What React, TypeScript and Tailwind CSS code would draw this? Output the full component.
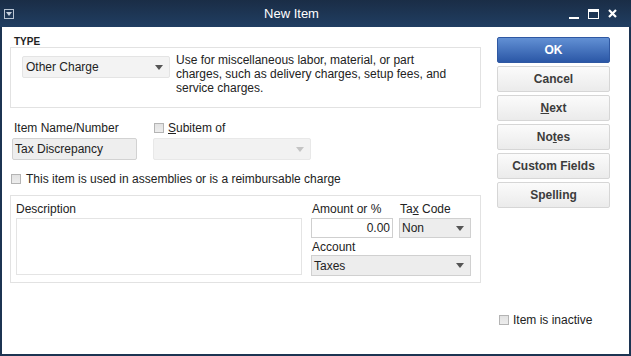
import React from "react";

const Arrow = ({ light = false }: { light?: boolean }) => (
  <svg width="8" height="5" viewBox="0 0 8 5" className="shrink-0">
    <path d="M0 0 L8 0 L4 5 Z" fill={light ? "#c4c4c4" : "#555"} />
  </svg>
);

const Check = () => (
  <span className="inline-block w-[10px] h-[10px] border border-[#b4b4b4] bg-gradient-to-b from-[#e2e2e2] to-[#ededed] shrink-0" />
);

const Btn = ({ children, primary = false }: { children: React.ReactNode; primary?: boolean }) => (
  <div
    className={
      primary
        ? "h-[26px] flex items-center justify-center rounded-[2px] border border-[#2f58a2] bg-gradient-to-b from-[#6290d4] to-[#2b57a6] text-white font-bold text-[12px]"
        : "h-[26px] flex items-center justify-center rounded-[2px] border border-[#d6d6d6] bg-gradient-to-b from-[#fbfbfb] to-[#ebebeb] text-[#3c3c3c] font-bold text-[12px]"
    }
  >
    {children}
  </div>
);

export default function App() {
  return (
    <div className="w-[631px] h-[356px] bg-[#1c3452] flex flex-col font-['Liberation_Sans',Arial,sans-serif] text-[#222] overflow-hidden">
      {/* Title bar */}
      <div className="h-[27px] shrink-0 flex items-center bg-gradient-to-b from-[#1a2d46] to-[#203e62] px-[4px]">
        <div className="w-[10px] h-[10px] border border-[#b9c4d2] flex items-center justify-center">
          <svg width="6" height="4" viewBox="0 0 6 4">
            <path d="M0 0 L6 0 L3 4 Z" fill="#c9d2de" />
          </svg>
        </div>
        <div className="flex-1 text-center text-white text-[13px]">New Item</div>
        <div className="flex items-center gap-[9px] pr-[10px]">
          <div className="w-[10px] h-[10px] flex items-end">
            <div className="w-[10px] h-[2px] bg-white" />
          </div>
          <div className="w-[11px] h-[10px] border-[1.5px] border-white border-t-[3px]" />
          <svg width="9" height="9" viewBox="0 0 9 9">
            <path d="M1 1 L8 8 M8 1 L1 8" stroke="white" strokeWidth="2.2" />
          </svg>
        </div>
      </div>

      {/* Body */}
      <div className="flex-1 mx-[2px] mb-[2px] bg-white flex text-[12px]">
        {/* Left column */}
        <div className="w-[471px] ml-[8px] flex flex-col">
          <div className="mt-[9px] pl-[4px] h-[11px] text-[10px] font-bold leading-[11px] text-[#222]">TYPE</div>
          <div className="h-[61px] border border-[#e2e2e2] flex pl-[11px] pt-[8px]">
            <div className="w-[148px] h-[22px] bg-[#f3f3f3] border border-[#e4e4e4] rounded-[2px] flex items-center pl-[3px] pr-[6px]">
              <span className="flex-1 text-[12px]">Other Charge</span>
              <Arrow />
            </div>
            <div className="ml-[6px] -mt-[3px] text-[12px] leading-[14px] w-[284px]">
              Use for miscellaneous labor, material, or part charges, such as delivery charges, setup fees, and service charges.
            </div>
          </div>

          <div className="flex mt-[13px]">
            <div className="flex flex-col w-[143px]">
              <div className="pl-[4px] h-[14px] leading-[14px]">Item Name/Number</div>
              <div className="mt-[3px] ml-[2px] w-[125px] h-[22px] bg-[#eeeeee] border border-[#d2d2d2] rounded-[2px] flex items-center pl-[2px]">
                Tax Discrepancy
              </div>
            </div>
            <div className="flex flex-col">
              <div className="pl-[1px] h-[14px] leading-[14px] flex items-center gap-[4px]">
                <Check />
                <span>
                  <u>S</u>ubitem of
                </span>
              </div>
              <div className="mt-[3px] w-[158px] h-[22px] bg-[#f2f2f2] border border-[#e8e8e8] rounded-[2px] flex items-center justify-end pr-[6px]">
                <Arrow light />
              </div>
            </div>
          </div>

          <div className="mt-[12px] flex items-center gap-[5px] pl-[1px] h-[14px] leading-[14px]">
            <Check />
            <span>This item is used in assemblies or is a reimbursable charge</span>
          </div>

          <div className="mt-[9px] h-[88px] border border-[#e2e2e2] flex pl-[5px] pt-[6px]">
            <div className="flex flex-col w-[295px]">
              <div className="h-[14px] leading-[14px]">Description</div>
              <div className="mt-[2px] w-[286px] h-[57px] border border-[#e4e4e4]" />
            </div>
            <div className="flex flex-col">
              <div className="flex">
                <div className="flex flex-col w-[88px]">
                  <div className="h-[14px] leading-[14px] pl-[1px]">Amount or %</div>
                  <div className="mt-[2px] w-[82px] h-[20px] border border-[#cfcfcf] flex items-center justify-end pr-[2px]">
                    0.00
                  </div>
                </div>
                <div className="flex flex-col">
                  <div className="h-[14px] leading-[14px] pl-[1px]">
                    Ta<u>x</u> Code
                  </div>
                  <div className="mt-[2px] w-[72px] h-[20px] bg-[#ededed] border border-[#d0d0d0] flex items-center pl-[2px] pr-[6px]">
                    <span className="flex-1">Non</span>
                    <Arrow />
                  </div>
                </div>
              </div>
              <div className="h-[14px] leading-[14px] pl-[1px] mt-[2px]">Account</div>
              <div className="mt-[1px] w-[160px] h-[21px] bg-[#ededed] border border-[#d0d0d0] flex items-center pl-[2px] pr-[6px]">
                <span className="flex-1">Taxes</span>
                <Arrow />
              </div>
            </div>
          </div>
        </div>

        {/* Right column */}
        <div className="w-[113px] ml-[16px] flex flex-col pt-[10px] pb-[27px]">
          <div className="flex flex-col gap-[3px]">
            <Btn primary>OK</Btn>
            <Btn>Cancel</Btn>
            <Btn>
              <span>
                <u>N</u>ext
              </span>
            </Btn>
            <Btn>
              <span>
                No<u>t</u>es
              </span>
            </Btn>
            <Btn>Custom Fields</Btn>
            <Btn>Spelling</Btn>
          </div>
          <div className="mt-auto flex items-center gap-[4px] pl-[2px] h-[14px] leading-[14px]">
            <Check />
            <span>Item is inactive</span>
          </div>
        </div>
      </div>
    </div>
  );
}
